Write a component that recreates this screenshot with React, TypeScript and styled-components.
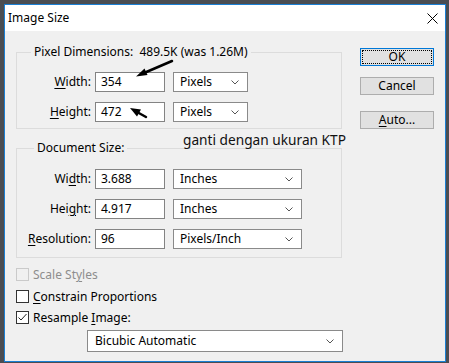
import styled, { createGlobalStyle } from 'styled-components'

const GlobalStyle = createGlobalStyle`
    html, body {
        margin: 0;
        padding: 0;
        background: #4a4d52;
    }

    body {
        font-family: "Noto Sans", "DejaVu Sans", sans-serif;
        font-size: 12px;
        color: #000;
    }
`

const Page = styled.div`
    box-sizing: border-box;
    width: 449px;
    height: 363px;
    padding: 4px 3px 1px 4px;
`

const Dialog = styled.div`
    position: relative;
    box-sizing: border-box;
    height: 358px;
    border: 1px solid #1a7fd4;
    background: #f0f0f0;
    display: flex;
    flex-direction: column;
`

const TitleBar = styled.div`
    height: 26px;
    background: #fff;
    display: flex;
    align-items: center;
    justify-content: space-between;
    padding: 0 7px 0 3px;
`

const Title = styled.span`
    font-size: 12px;
    line-height: 16px;
`

const Body = styled.div`
    display: flex;
    gap: 18px;
    padding: 0 11px;
`

const LeftCol = styled.div`
    width: 326px;
    display: flex;
    flex-direction: column;
`

const Group = styled.fieldset<{ top: number; padTop: number; padBottom: number }>`
    margin: ${p => p.top}px 0 0 0;
    padding: ${p => p.padTop}px 0 ${p => p.padBottom}px 0;
    border: 1px solid #dcdcdc;
    min-width: 0;
    display: flex;
    flex-direction: column;
    gap: 10px;
`

const Legend = styled.legend<{ indent: number }>`
    margin-left: ${p => p.indent}px;
    padding: 0 3px;
    line-height: 16px;
    white-space: pre;
`

const Row = styled.div`
    display: flex;
    align-items: center;
    height: 20px;
`

const Label = styled.span`
    width: 74px;
    margin-right: 4px;
    text-align: right;
    line-height: 16px;
`

const U = styled.span`
    text-decoration: underline;
    text-underline-offset: 2px;
`

const Input = styled.div`
    box-sizing: border-box;
    width: 70px;
    height: 20px;
    margin-right: 8px;
    padding-left: 5px;
    border: 1px solid #838383;
    background: #fff;
    display: flex;
    align-items: center;
    line-height: 16px;
`

const Select = styled.div<{ width: number; height?: number }>`
    box-sizing: border-box;
    width: ${p => p.width}px;
    height: ${p => p.height ?? 20}px;
    padding: 0 8px 0 6px;
    border: 1px solid #8a8a8a;
    background: #fff;
    display: flex;
    align-items: center;
    justify-content: space-between;
    line-height: 16px;
`

const BicubicSelect = styled(Select)`
    margin: 1.5px 0 0 71px;
    padding-left: 7px;
`

const CheckList = styled.div`
    margin-top: 6px;
    display: flex;
    flex-direction: column;
`

const CheckRow = styled.div<{ disabled?: boolean }>`
    height: 21.5px;
    display: flex;
    align-items: center;
    gap: 4px;
    color: ${p => p.disabled ? '#8d8d8d' : '#000'};
`

const Box = styled.span<{ disabled?: boolean }>`
    box-sizing: border-box;
    width: 13px;
    height: 13px;
    border: 1px solid ${p => p.disabled ? '#cacaca' : '#333'};
    background: ${p => p.disabled ? '#f0f0f0' : '#fff'};
    display: flex;
    align-items: center;
    justify-content: center;
`

const ButtonCol = styled.div`
    width: 74px;
    padding-top: 17px;
    display: flex;
    flex-direction: column;
`

const Button = styled.div<{ gapTop?: number; primary?: boolean }>`
    position: relative;
    box-sizing: border-box;
    height: 18px;
    margin-top: ${p => p.gapTop ?? 0}px;
    border: 1px solid ${p => p.primary ? '#0078d7' : '#adadad'};
    background: #e1e1e1;
    display: flex;
    align-items: center;
    justify-content: center;
    line-height: 14px;

    ${p => p.primary && `
        &::after {
            content: '';
            position: absolute;
            inset: 1px;
            border: 1px dotted #000;
        }
    `}
`

const Note = styled.span`
    position: absolute;
    left: 178px;
    top: 127px;
    font-size: 13.7px;
    line-height: 16px;
    color: #111;
`

const Overlay = styled.svg`
    position: absolute;
    left: -5px;
    top: -5px;
    pointer-events: none;
`

function Chevron() {
    return (
        <svg width="8" height="5" viewBox="0 0 8 5">
            <polyline points="0.5,0.5 4,4 7.5,0.5" fill="none" stroke="#555" strokeWidth="1" />
        </svg>
    )
}

function CloseIcon() {
    return (
        <svg width="11" height="11" viewBox="0 0 11 11">
            <path d="M0.5 0.5 L10.5 10.5 M10.5 0.5 L0.5 10.5" stroke="#000" strokeWidth="1" />
        </svg>
    )
}

function Check() {
    return (
        <svg width="11" height="11" viewBox="0 0 11 11">
            <polyline points="1.5,5.5 4,8 9.5,2" fill="none" stroke="#222" strokeWidth="1" />
        </svg>
    )
}

export default function App() {
    return (
        <Page>
            <GlobalStyle />
            <Dialog>
                <TitleBar>
                    <Title>Image Size</Title>
                    <CloseIcon />
                </TitleBar>
                <Body>
                    <LeftCol>
                        <Group top={13} padTop={12} padBottom={6}>
                            <Legend indent={14}>Pixel Dimensions:  489.5K (was 1.26M)</Legend>
                            <Row>
                                <Label><U>W</U>idth:</Label>
                                <Input>354</Input>
                                <Select width={75}>Pixels <Chevron /></Select>
                            </Row>
                            <Row>
                                <Label><U>H</U>eight:</Label>
                                <Input>472</Input>
                                <Select width={75}>Pixels <Chevron /></Select>
                            </Row>
                        </Group>
                        <Group top={11} padTop={13} padBottom={8}>
                            <Legend indent={17}>Document Size:</Legend>
                            <Row>
                                <Label>Wi<U>d</U>th:</Label>
                                <Input>3.688</Input>
                                <Select width={129}>Inches <Chevron /></Select>
                            </Row>
                            <Row>
                                <Label>Hei<U>g</U>ht:</Label>
                                <Input>4.917</Input>
                                <Select width={129}>Inches <Chevron /></Select>
                            </Row>
                            <Row>
                                <Label><U>R</U>esolution:</Label>
                                <Input>96</Input>
                                <Select width={129}>Pixels/Inch <Chevron /></Select>
                            </Row>
                        </Group>
                        <CheckList>
                            <CheckRow disabled>
                                <Box disabled />
                                <span>Scale St<U>y</U>les</span>
                            </CheckRow>
                            <CheckRow>
                                <Box />
                                <span><U>C</U>onstrain Proportions</span>
                            </CheckRow>
                            <CheckRow>
                                <Box><Check /></Box>
                                <span>Resample <U>I</U>mage:</span>
                            </CheckRow>
                        </CheckList>
                        <BicubicSelect width={256} height={22}>Bicubic Automatic <Chevron /></BicubicSelect>
                    </LeftCol>
                    <ButtonCol>
                        <Button primary>OK</Button>
                        <Button gapTop={11}>Cancel</Button>
                        <Button gapTop={16}><span><U>A</U>uto...</span></Button>
                    </ButtonCol>
                </Body>
                <Note>ganti dengan ukuran KTP</Note>
                <Overlay width="449" height="363" viewBox="0 0 449 363">
                    <line x1="172" y1="61" x2="144" y2="73" stroke="#000" strokeWidth="2.5" strokeLinecap="round" />
                    <polygon points="136,76.5 147.5,75 144.5,68.5" fill="#000" />
                    <line x1="146" y1="117" x2="137" y2="112" stroke="#000" strokeWidth="2.5" strokeLinecap="round" />
                    <polygon points="130,108 141,109.5 137,116.5" fill="#000" />
                </Overlay>
            </Dialog>
        </Page>
    )
}
